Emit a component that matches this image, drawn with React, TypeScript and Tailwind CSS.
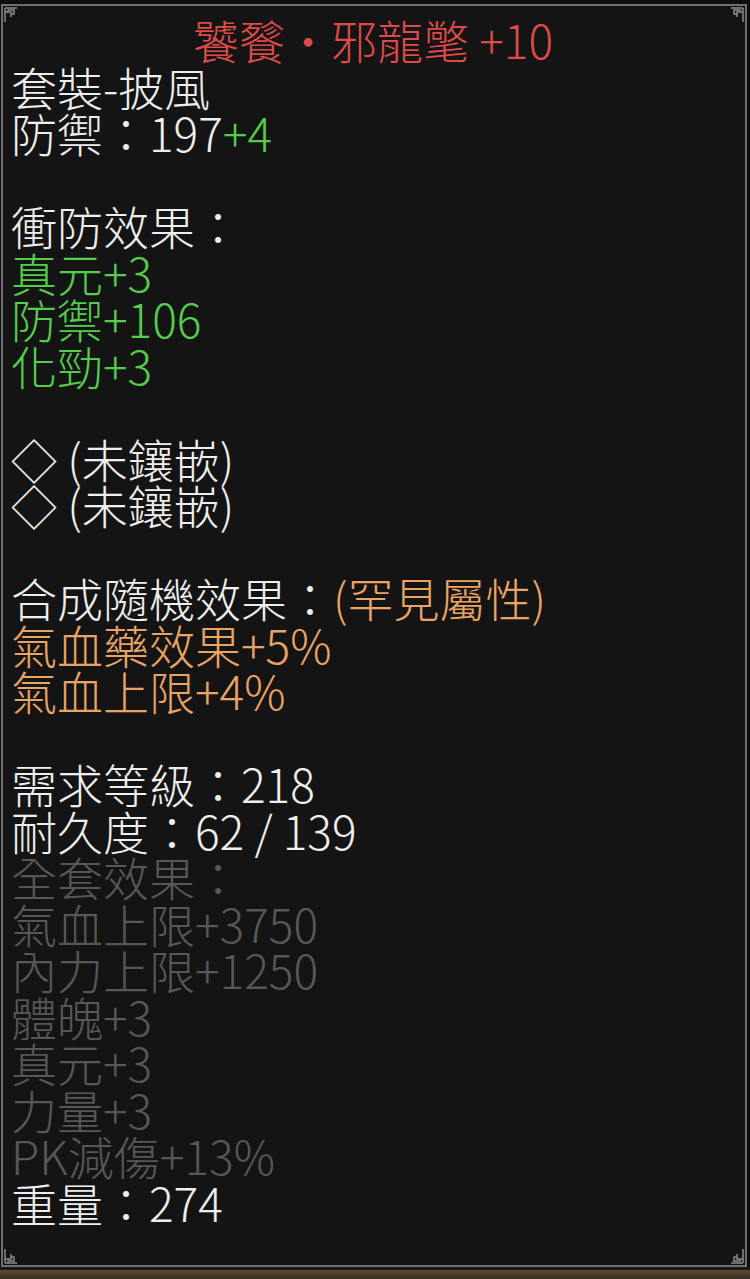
import React from "react";

const W = "text-[#efefef]";
const G = "text-[#55cc4e]";
const O = "text-[#e9a466]";
const R = "text-[#dc4a4a]";
const D = "text-[#575757]";

function Line({ children, className = "" }: { children?: React.ReactNode; className?: string }) {
  return <div className={`h-[46.5px] leading-[46.5px] whitespace-pre ${className}`}>{children}</div>;
}

function Corner({ className }: { className: string }) {
  return (
    <svg className={`absolute w-[14px] h-[16px] ${className}`} viewBox="0 0 14 16" fill="none" stroke="#8a8a8a" strokeWidth="1.5">
      <path d="M1 1 V15 M1 1 H13 M1 5 H7 V10 M4 5 V3 H10 V7 H7" />
    </svg>
  );
}

export default function App() {
  return (
    <div className="w-[750px] h-[1279px] bg-[#0e0e0e] flex flex-col pt-[4px] overflow-hidden">
      <div
        className="relative ml-[1px] w-[746px] h-[1263px] border-2 border-[#6f6f6f] bg-[#141414] pt-[10px] pl-[8px] text-[46px] font-light"
        style={{ fontFamily: '"Noto Sans CJK TC", "Noto Sans CJK SC", sans-serif' }}
      >
        <Corner className="top-[1px] left-[1px]" />
        <Corner className="top-[1px] right-[1px] -scale-x-100" />
        <Corner className="bottom-[1px] left-[1px] -scale-y-100" />
        <Corner className="bottom-[1px] right-[1px] -scale-x-100 -scale-y-100" />

        <Line className={`${R} text-center pr-[10px]`}>饕餮・邪龍氅 +10</Line>
        <Line className={W}>套裝-披風</Line>
        <Line className={W}>
          防禦：197<span className={G}>+4</span>
        </Line>
        <Line />
        <Line className={W}>衝防效果：</Line>
        <Line className={G}>真元+3</Line>
        <Line className={G}>防禦+106</Line>
        <Line className={G}>化勁+3</Line>
        <Line />
        <Line className={W}>◇ (未鑲嵌)</Line>
        <Line className={W}>◇ (未鑲嵌)</Line>
        <Line />
        <Line className={W}>
          合成隨機效果：<span className={O}>(罕見屬性)</span>
        </Line>
        <Line className={O}>氣血藥效果+5%</Line>
        <Line className={O}>氣血上限+4%</Line>
        <Line />
        <Line className={W}>需求等級：218</Line>
        <Line className={W}>耐久度：62 / 139</Line>
        <Line className={D}>全套效果：</Line>
        <Line className={D}>氣血上限+3750</Line>
        <Line className={D}>內力上限+1250</Line>
        <Line className={D}>體魄+3</Line>
        <Line className={D}>真元+3</Line>
        <Line className={D}>力量+3</Line>
        <Line className={D}>PK減傷+13%</Line>
        <Line className={W}>重量：274</Line>
      </div>
      <div className="h-[3px] bg-[#1a1a1a]" />
      <div className="flex-1 bg-gradient-to-b from-[#5a4a34] to-[#3a2e20]" />
    </div>
  );
}
